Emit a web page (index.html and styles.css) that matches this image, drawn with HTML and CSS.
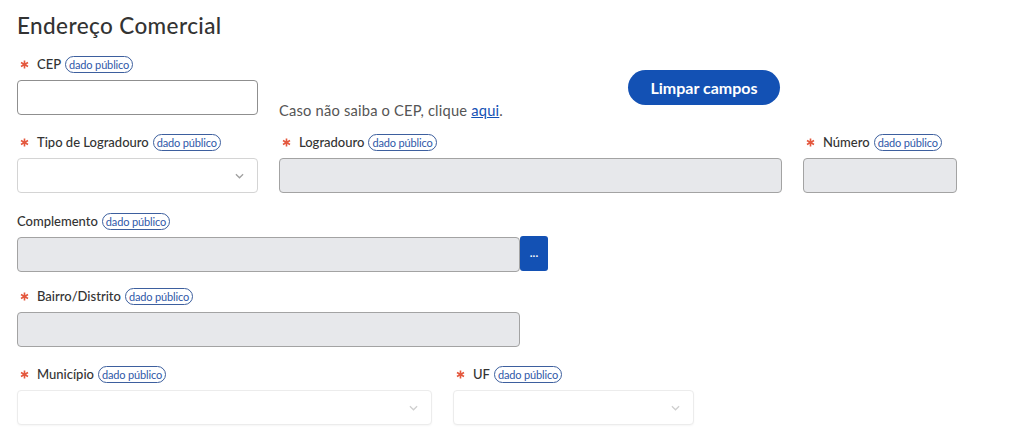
FILE: index.html
```html
<!DOCTYPE html>
<html lang="pt-BR">
<head>
<meta charset="utf-8">
<title>Endereço Comercial</title>
<link rel="stylesheet" href="styles.css">
</head>
<body>
<main class="form">
  <h2 class="title">Endereço Comercial</h2>

  <div class="row row-cep">
    <div class="field">
      <div class="label"><svg class="req" viewBox="0 0 10 10"><path d="M5 0.5V9.5M1.1 2.75L8.9 7.25M1.1 7.25L8.9 2.75"/></svg><span>CEP</span><span class="badge">dado público</span></div>
      <input class="input" type="text">
    </div>
    <p class="help">Caso não saiba o CEP, clique <a href="#">aqui</a>.</p>
    <button class="btn-primary" type="button">Limpar campos</button>
  </div>

  <div class="row row-2">
    <div class="field">
      <div class="label"><svg class="req" viewBox="0 0 10 10"><path d="M5 0.5V9.5M1.1 2.75L8.9 7.25M1.1 7.25L8.9 2.75"/></svg><span>Tipo de Logradouro</span><span class="badge">dado público</span></div>
      <div class="select"><svg class="chev" viewBox="0 0 10 6"><path d="M1 1L5 5L9 1"/></svg></div>
    </div>
    <div class="field">
      <div class="label"><svg class="req" viewBox="0 0 10 10"><path d="M5 0.5V9.5M1.1 2.75L8.9 7.25M1.1 7.25L8.9 2.75"/></svg><span>Logradouro</span><span class="badge">dado público</span></div>
      <div class="input disabled"></div>
    </div>
    <div class="field">
      <div class="label"><svg class="req" viewBox="0 0 10 10"><path d="M5 0.5V9.5M1.1 2.75L8.9 7.25M1.1 7.25L8.9 2.75"/></svg><span>Número</span><span class="badge">dado público</span></div>
      <div class="input disabled"></div>
    </div>
  </div>

  <div class="row row-3">
    <div class="field">
      <div class="label"><span>Complemento</span><span class="badge">dado público</span></div>
      <div class="input-group">
        <div class="input disabled grow"></div>
        <button class="btn-more" type="button">...</button>
      </div>
    </div>
  </div>

  <div class="row row-4">
    <div class="field">
      <div class="label"><svg class="req" viewBox="0 0 10 10"><path d="M5 0.5V9.5M1.1 2.75L8.9 7.25M1.1 7.25L8.9 2.75"/></svg><span>Bairro/Distrito</span><span class="badge">dado público</span></div>
      <div class="input disabled"></div>
    </div>
  </div>

  <div class="row row-5">
    <div class="field">
      <div class="label"><svg class="req" viewBox="0 0 10 10"><path d="M5 0.5V9.5M1.1 2.75L8.9 7.25M1.1 7.25L8.9 2.75"/></svg><span>Município</span><span class="badge">dado público</span></div>
      <div class="select light"><svg class="chev" viewBox="0 0 10 6"><path d="M1 1L5 5L9 1"/></svg></div>
    </div>
    <div class="field">
      <div class="label"><svg class="req" viewBox="0 0 10 10"><path d="M5 0.5V9.5M1.1 2.75L8.9 7.25M1.1 7.25L8.9 2.75"/></svg><span>UF</span><span class="badge">dado público</span></div>
      <div class="select light"><svg class="chev" viewBox="0 0 10 6"><path d="M1 1L5 5L9 1"/></svg></div>
    </div>
  </div>
</main>
</body>
</html>
```

FILE: styles.css
```css
* { box-sizing: border-box; }

html, body {
  margin: 0;
  padding: 0;
  background: #ffffff;
}

body {
  font-family: Lato, "Open Sans", "Liberation Sans", sans-serif;
  color: #333333;
}

.form {
  padding: 12px 0 0 17px;
}

.title {
  margin: 0 0 15px 0;
  font-size: 22.5px;
  line-height: 28px;
  font-weight: 500;
  letter-spacing: 0.4px;
  color: #333333;
}

.row {
  display: grid;
  column-gap: 21px;
  margin-bottom: 18px;
}

.row-cep { grid-template-columns: 241px 328px 152px; }
.row-2 { grid-template-columns: 241px 503px 154px; margin-bottom: 19px; }
.row-3 { grid-template-columns: 531px; margin-bottom: 15px; }
.row-4 { grid-template-columns: 503px; }
.row-5 { grid-template-columns: 415px 241px; }

.field {
  display: flex;
  flex-direction: column;
}

.label {
  display: flex;
  align-items: center;
  height: 18px;
  margin-bottom: 7px;
  font-size: 13px;
  font-weight: 500;
  color: #333333;
  white-space: nowrap;
}

.req {
  width: 9px;
  height: 9px;
  margin: 0 8px 0 3px;
  fill: none;
  stroke: #e4583e;
  stroke-width: 1.8;
}

.badge {
  display: inline-flex;
  align-items: center;
  height: 17px;
  margin-left: 4px;
  padding: 0 3px;
  border: 1px solid #3d5f9e;
  border-radius: 9px;
  font-size: 11px;
  font-weight: 400;
  letter-spacing: -0.15px;
  color: #2f58a8;
}

.input {
  height: 35px;
  width: 100%;
  border: 1px solid #8f8f8f;
  border-radius: 4px;
  background: #ffffff;
  font: inherit;
}

.input.disabled {
  background: #e7e8eb;
  border-color: #a3a3a3;
}

.select {
  height: 35px;
  border: 1px solid #d4d4d4;
  border-radius: 4px;
  background: #ffffff;
  display: flex;
  align-items: center;
  justify-content: flex-end;
  padding-right: 13px;
}

.select.light {
  border-color: #ececec;
  box-shadow: 0 1px 2px rgba(0, 0, 0, 0.04);
}

.chev {
  width: 9px;
  height: 6px;
  fill: none;
  stroke: #a0a0a0;
  stroke-width: 1.4;
}

.select.light .chev { stroke: #cfcfcf; }

.help {
  align-self: end;
  margin: 0 0 -4px 0;
  font-size: 14.7px;
  line-height: 18px;
  letter-spacing: 0.2px;
  color: #555555;
}

.help a {
  color: #1351b4;
  text-decoration: underline;
}

.btn-primary {
  align-self: start;
  margin-top: 15px;
  height: 35px;
  border: 0;
  border-radius: 18px;
  background: #1351b4;
  color: #ffffff;
  font-family: Lato, "Open Sans", sans-serif;
  font-size: 16px;
  font-weight: 700;
  cursor: pointer;
}

.input-group {
  display: flex;
  align-items: flex-start;
}

.grow { flex: 0 0 503px; }

.btn-more {
  flex: 0 0 28px;
  height: 35px;
  margin-top: -1px;
  border: 0;
  border-radius: 3px;
  background: #1351b4;
  color: #ffffff;
  font-size: 10px;
  font-weight: 700;
  line-height: 1;
  padding: 0;
}
```
